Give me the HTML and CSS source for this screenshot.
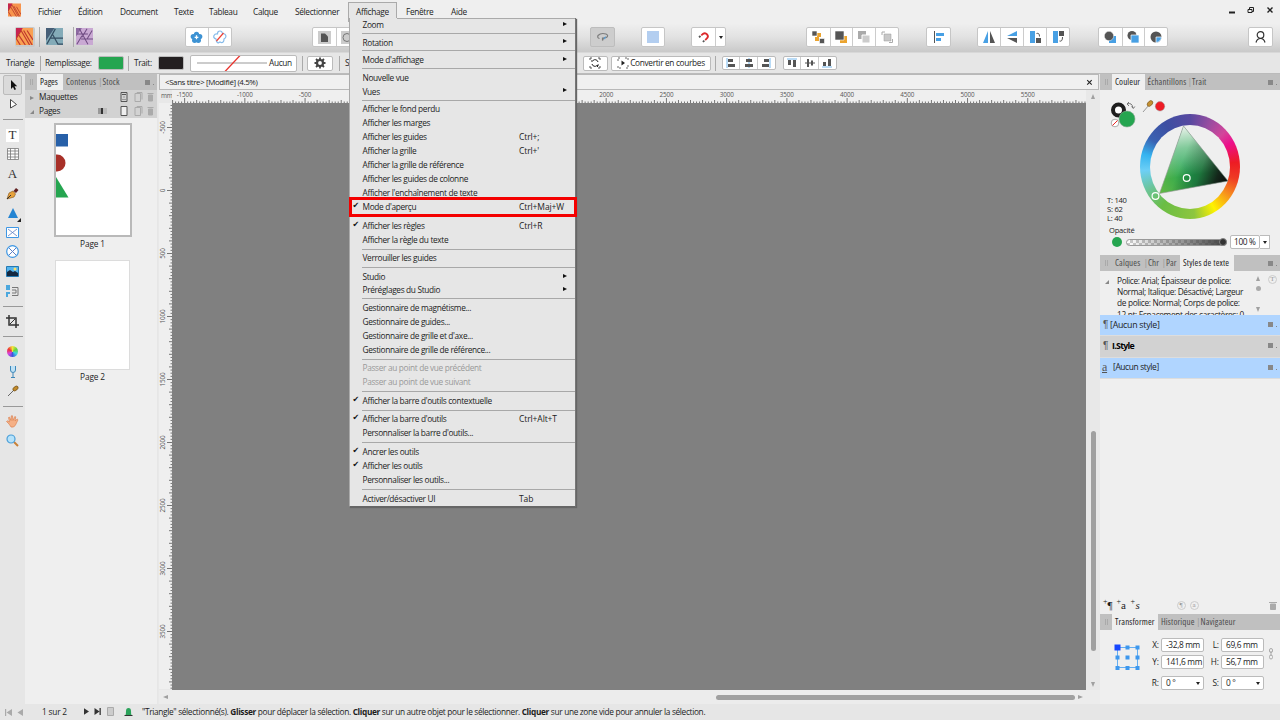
FILE: index.html
```html
<!DOCTYPE html>
<html lang="fr">
<head>
<meta charset="utf-8">
<title>Sans titre</title>
<link rel="stylesheet" href="styles.css">
</head>
<body>
<div class="app">
  <header class="menubar">
    <svg class="logo" width="13" height="14" viewBox="0 0 20 20"><rect width="20" height="20" fill="#f7944d"/><path d="M0 0H7L0 12Z" fill="#c4264e"/><path d="M0 12L6 2L16 20M4 5L13 20M0 12L5 20M9 4L18 20M13 5L20 17" stroke="#b93a2c" stroke-width="1.3" fill="none"/></svg>
    <span>Fichier</span><span>Édition</span><span>Document</span><span>Texte</span><span>Tableau</span><span>Calque</span><span>Sélectionner</span><span class="open">Affichage</span><span>Fenêtre</span><span>Aide</span>
    <div class="winctl">
      <svg width="60" height="14" viewBox="0 0 60 14" fill="none" stroke="#222"><path d="M3 10.500h6" stroke-width="2"/><path d="M22 7.500h4v3h-4zM23.500 7v-1.500h4v4h-1.500" /><path d="M41.500 5.500l5 5m0-5l-5 5" stroke-width="1.400"/></svg>
    </div>
  </header>

  <div class="toolbar">
    <div class="persona on"><svg width="17" height="17" viewBox="0 0 20 20"><rect width="20" height="20" fill="#f9a052"/><path d="M0 0H8L0 13Z" fill="#c72350"/><path d="M0 13L6 3L16 20M3 8L11 20M0 12L5 20M9 3L19 20M13 3L20 14" stroke="#c0392d" stroke-width="1.400" fill="none"/></svg></div>
    <div class="persona p2"><svg width="17" height="17" viewBox="0 0 20 20"><rect width="20" height="20" fill="#84abb8"/><path d="M0 0H10L0 15Z" fill="#465e77"/><path d="M11 1L1 19M5 12H20M8 8L14 19H20" stroke="#344d62" stroke-width="1.400" fill="none"/></svg></div>
    <div class="persona p3"><svg width="17" height="17" viewBox="0 0 20 20"><rect width="20" height="20" fill="#c9a9d3"/><path d="M0 0H7L0 10Z" fill="#8d6aa2"/><path d="M4 1L14 19M13 1L7 11M1 7H14M6 13H20M19 3L13 13M7 9L1 19" stroke="#704d83" stroke-width="1.200" fill="none"/></svg></div>
    <div class="grp g1">
      <b><svg width="13" height="13" viewBox="0 0 14 14"><g fill="#3d92d3"><circle cx="7" cy="3.500" r="2.800"/><circle cx="10.500" cy="6" r="2.800"/><circle cx="9" cy="10" r="2.800"/><circle cx="5" cy="10" r="2.800"/><circle cx="3.500" cy="6" r="2.800"/></g><path d="M7 4.500V9M5 6.800h4" stroke="#fff" stroke-width="1.400"/></svg></b>
      <b><svg width="14" height="14" viewBox="0 0 14 14"><path d="M7 1Q9 1 9.500 3.500Q12.500 3.500 13 6Q13 8 11 9Q11 13 8 12.500L7 12L5 13Q3 12 3 9Q0 8 1 5.500Q2 3.500 4.500 4Q4.500 1 7 1Z" fill="#fff" stroke="#86bbea" stroke-width="1.200"/><path d="M3.500 11L10.500 3" stroke="#ee4035" stroke-width="1.200"/></svg></b>
    </div>
    <div class="grp g2">
      <b><svg width="13" height="13" viewBox="0 0 13 13"><rect width="13" height="13" fill="#ccc"/><path d="M3 2.500h4l3 3V11H3z" fill="#555"/></svg></b>
      <b><svg width="13" height="13" viewBox="0 0 13 13"><rect width="13" height="13" fill="#ccc"/><circle cx="6" cy="6.500" r="4" fill="none" stroke="#777"/></svg></b>
    </div>
    <div class="grp g3 pressed"><b><svg width="14" height="12" viewBox="0 0 14 12"><path d="M3.500 7.500Q1 7 2 4.500Q5 1.500 10 3Q13 4.500 10.500 6.500L7.500 7L6.500 9.500V6.500" fill="none" stroke="#7c7c7c" stroke-width="1.200"/><path d="M7.500 7L10 5L9 8.500Z" fill="#519bd5"/></svg></b></div>
    <div class="grp g4"><b><i class="bluesq"></i></b></div>
    <div class="grp g5"><b><svg width="14" height="14" viewBox="0 0 14 14"><g transform="rotate(50 7 7)" fill="none" stroke-width="1.800"><path d="M4 8V6a3 3 0 016 0V8" stroke="#dc292c"/><path d="M4 9v2M10 9v2" stroke="#555"/></g></svg></b><b class="drop"><i class="dn"></i></b></div>
    <div class="grp g6">
      <b><svg width="14" height="14"><path d="M6 3h4v4H6zM4 7h4v4H4z" fill="#eba430"/><path d="M1 1h5v5H1zM8.500 8.500h5v5h-5z" fill="#555" stroke="#fff" stroke-width=".6"/></svg></b>
      <b><svg width="14" height="14"><path d="M6 6h7v7H6z" fill="#eba430"/><path d="M1 1h9v9H1z" fill="#555" stroke="#fff" stroke-width=".6"/></svg></b>
      <b><svg width="14" height="14"><path d="M1 1h8v8H1z" fill="#aaa"/><path d="M5 5h8v8H5z" fill="#ccc" stroke="#fff"/></svg></b>
      <b><svg width="14" height="14"><path d="M2 5V2h3M9 12.500h3.500v-3.500" fill="none" stroke="#aaa"/><path d="M4 4h7v7H4z" fill="#c8c8c8" stroke="#999" stroke-width=".5"/></svg></b>
    </div>
    <div class="grp g7"><b><svg width="12" height="12"><path d="M1.500 0v12" stroke="#555"/><path d="M3 2h8v3H3zM3 7h5v3H3z" fill="#48a0e4"/></svg></b></div>
    <div class="grp g8">
      <b><svg width="14" height="14"><path d="M6 1v12H1z" fill="#48a0e4"/><path d="M8 1v12h5z" fill="#555"/></svg></b>
      <b><svg width="14" height="14"><path d="M12 1v5H2z" fill="#48a0e4"/><path d="M12 13V8H2z" fill="#555"/></svg></b>
      <b><svg width="14" height="14"><path d="M2 1h5v12H2z" fill="#48a0e4"/><path d="M8 8h5v5H8z" fill="#555"/><path d="M8.500 3.500q3-1 3 3" fill="none" stroke="#555"/></svg></b>
      <b><svg width="14" height="14"><path d="M2 1h5v12H2z" fill="#48a0e4"/><path d="M8 1h5v5H8z" fill="#555"/><path d="M8.500 11q3 1 3-4" fill="none" stroke="#555"/></svg></b>
    </div>
    <div class="grp g9">
      <b><svg width="14" height="14"><path d="M6 6h7v7H6z" fill="#48a0e4"/><circle cx="6" cy="6" r="4.700" fill="#555" stroke="#fff" stroke-width=".5"/></svg></b>
      <b><svg width="14" height="14"><circle cx="6" cy="5.500" r="4.500" fill="#555"/><path d="M5 5h8v8H5z" fill="#48a0e4" stroke="#fff" stroke-width=".7"/></svg></b>
      <b><svg width="14" height="14"><circle cx="7" cy="7" r="5.500" fill="#555"/><path d="M7 7h5.500a5.500 5.500 0 01-5.500 5.500z" fill="#48a0e4" stroke="#fff" stroke-width=".7"/></svg></b>
    </div>
    <div class="grp g10"><b><svg width="13" height="14" fill="none" stroke="#333" stroke-width="1.200"><circle cx="6.500" cy="5" r="3.300"/><path d="M2 12.500Q3 8.500 6.500 8.500T11 12.500"/></svg></b></div>
  </div>

  <div class="context">
    <span>Triangle</span><i class="vs"></i><span>Remplissage:</span><i class="sw green"></i><i class="vs"></i><span>Trait:</span><i class="sw black"></i>
    <div class="stroke"><svg width="76" height="17"><path d="M6 8h70" stroke="#999"/><path d="M34 16.500L49 .5" stroke="#e8322c" stroke-width="1.300"/></svg><span>Aucun</span></div>
    <i class="vs"></i>
    <div class="box"><svg width="12" height="12" viewBox="-6 -6 12 12"><circle r="3" fill="none" stroke="#444" stroke-width="2.200"/><path d="M0-5.500V-3M0 5.500V3M-5.500 0H-3M5.500 0H3M-4-4l1.500 1.500M4 4L2.500 2.500M-4 4l1.500-1.500M4-4L2.500-2.500" stroke="#444" stroke-width="1.800"/></svg></div>
    <i class="vs"></i><span>S</span>
    <div class="box rot"><svg width="12" height="12" fill="none" stroke="#555"><path d="M1 3V1h2M9 1h2v2M11 9v2H9M3 11H1V9" /><path d="M3 7a3 3 0 005 1.500M9 5A3 3 0 004 3.500M8.500 10V8H10M3 5V3" stroke="#222"/></svg></div>
    <div class="box conv"><svg width="12" height="12"><path d="M1 4V1h3M8 1h3v3M11 8v3H8M4 11H1V8" fill="none" stroke="#666" stroke-dasharray="2 1"/><path d="M4.500 3.500v5L8 6z" fill="#222"/></svg><span>Convertir en courbes</span></div>
    <i class="vs"></i>
    <div class="tri">
      <b><svg width="10" height="10"><path d="M1 0v10" stroke="#75b8ee"/><path d="M2 1h5v3H2zM2 6h7v3H2z" fill="#555"/></svg></b>
      <b><svg width="10" height="10"><path d="M5 0v10" stroke="#75b8ee"/><path d="M2 1h6v3H2zM1 6h8v3H1z" fill="#555"/></svg></b>
      <b><svg width="10" height="10"><path d="M9 0v10" stroke="#75b8ee"/><path d="M3 1h5v3H3zM1 6h7v3H1z" fill="#555"/></svg></b>
    </div>
    <div class="tri t2">
      <b><svg width="10" height="10"><path d="M0 1h10" stroke="#75b8ee"/><path d="M1 2h3v5H1zM6 2h3v7H6z" fill="#555"/></svg></b>
      <b><svg width="10" height="10"><path d="M0 5h10" stroke="#555"/><path d="M2 1h2v8H2zM6 2.500h2v5H6z" fill="#555"/></svg></b>
      <b><svg width="10" height="10"><path d="M0 9h10" stroke="#75b8ee"/><path d="M1 4h3v4H1zM6 1h3v7H6z" fill="#555"/></svg></b>
    </div>
  </div>

  <main class="main">
    <nav class="tools">
      <div class="tool sel"><svg width="12" height="12"><path d="M4 1v9l2-2 1.500 3 1.500-.7-1.500-3h2.700z" fill="#111"/></svg></div>
      <div class="tool"><svg width="12" height="12"><path d="M3.500 1.500v8.500L9.500 6.500z" fill="#fff" stroke="#444"/></svg></div>
      <hr>
      <div class="tool serif tbox">T</div>
      <div class="tool"><svg width="12" height="12"><path d="M.5.5h11v11H.5zM.5 3h11M.5 6h11M.5 9h11M3.500 .5v11M8 .5v11" fill="#fff" stroke="#777" stroke-width=".8"/></svg></div>
      <div class="tool serif">A</div>
      <div class="tool"><svg width="13" height="13"><path d="M1 12L3 6l4-2 2.500 3L8 10z" fill="#e8a33d" stroke="#815018" stroke-width=".6"/><path d="M1 12L5 8" stroke="#333"/><path d="M7.500 4L10 1l2.500 2L10 6z" fill="#612121"/></svg></div>
      <div class="tool corner"><svg width="12" height="12"><path d="M6 1l5 10H1z" fill="#2484d2"/></svg></div>
      <div class="tool"><svg width="13" height="11"><path d="M.5.5h12v10H.5z" fill="#fff" stroke="#3e97e4"/><path d="M2 2l9 7M11 2L2 9" stroke="#5c7fc4" stroke-width=".8"/></svg></div>
      <div class="tool"><svg width="13" height="13"><circle cx="6.500" cy="6.500" r="5.800" fill="#fff" stroke="#3e97e4" stroke-width="1.200"/><path d="M3 3l7 7M10 3l-7 7" stroke="#5c7fc4"/></svg></div>
      <div class="tool"><svg width="13" height="11"><path d="M.5.5h12v10H.5z" fill="#54b4ee" stroke="#247ab3"/><circle cx="9" cy="3" r="1.500" fill="#ffe069"/><path d="M1 6l3-2 3 2 2-1 3 2v3H1z" fill="#142941"/></svg></div>
      <div class="tool"><svg width="13" height="12"><path d="M0 0h4v5H0zM0 7h4v2H2v3H0z" fill="#4ca8de"/><path d="M6 2.500h6v8H6M6 5h4v3H6" fill="none" stroke="#777"/></svg></div>
      <hr>
      <div class="tool"><svg width="13" height="13" fill="none" stroke="#333" stroke-width="1.500"><path d="M3 0v10h10M0 3h10v10"/><path d="M4 9l5-5" stroke-width="1"/></svg></div>
      <hr>
      <div class="tool"><i class="mini"></i></div>
      <div class="tool"><svg width="10" height="13"><path d="M2.500 1v4q0 2.500 2.500 2.500t2.500-2.500V1M5 8v4M3 12.500h4" fill="#bfe1f5" stroke="#3d87b9"/></svg></div>
      <div class="tool"><svg width="12" height="12"><path d="M1 11L8 4" stroke="#666"/><ellipse cx="8.500" cy="3.500" rx="3" ry="1.900" transform="rotate(-40 8.500 3.500)" fill="#c28b2c" stroke="#644310" stroke-width=".6"/></svg></div>
      <hr>
      <div class="tool"><svg width="13" height="13"><path d="M3 9L.5 6.500l1-.7L3.500 7 2.500 2.500l1-.4L5 5.500 5.300.8h1.200L7 5.500 8.800 1.500l1 .4L9 6l2.200-2 .8.800L9.500 10Q8 13 5 12z" fill="#f5b086" stroke="#d87847" stroke-width=".6"/></svg></div>
      <div class="tool"><svg width="13" height="13"><path d="M8 8l4 4" stroke="#c98138" stroke-width="2"/><circle cx="5" cy="5" r="4" fill="#b6e2fa" stroke="#4b9fd8" stroke-width="1.200"/></svg></div>
    </nav>

    <aside class="pages">
      <div class="tabs"><i class="grip"></i><span class="tab">Pages</span><span class="off">Contenus</span><em>|</em><span class="stock">Stock</span><i class="more"></i></div>
      <div class="prow"><i class="arr r"></i><span>Maquettes</span>
        <svg width="34" height="10" viewBox="0 0 34 10" fill="none" stroke="#555"><path d="M1 .5h6v9H1zM2 2.500h4" /><path d="M3 5h2M2 7.500h4" stroke="#999"/><path d="M15 1.500h5.500v8H15zM17 1.500v-1h5v7" stroke="#aaa"/><path d="M28.500 3h4v6h-4zM27.500 1.500h6" fill="#aaa" stroke="#aaa"/></svg></div>
      <div class="prow"><i class="arr"></i><span>Pages</span><i class="bars"></i>
        <svg width="34" height="10" viewBox="0 0 34 10" fill="none" stroke="#555"><path d="M1 .5h6v9H1z" fill="#eee"/><path d="M15 1.500h5.500v8H15zM17 1.500v-1h5v7" stroke="#aaa"/><path d="M28.500 3h4v6h-4zM27.500 1.500h6" fill="#aaa" stroke="#aaa"/></svg></div>
      <figure class="thumb first"><svg width="73" height="108"><path d="M0 9h12v12.500H0z" fill="#2760a8"/><path d="M0 29.500h1a8.300 8.300 0 010 17H0z" fill="#a83028"/><path d="M0 52l12.500 20.500H0z" fill="#25a550"/></svg></figure>
      <p>Page 1</p>
      <figure class="thumb second"></figure>
      <p>Page 2</p>
    </aside>

    <section class="doc">
      <div class="doctab"><span>&lt;Sans titre&gt; [Modifié] (4.5%)</span><svg width="7" height="7"><path d="M1.200 1.200l4.500 4.500m0-4.500l-4.500 4.500" stroke="#222" stroke-width="1.100"/></svg></div>
      <div class="work">
        <div class="unit">mm</div>
        <svg class="hr" id="hruler" width="914" height="14"></svg>
        <div class="vbar"><i class="ar u"></i><i class="vthumb"></i><i class="ar d"></i></div>
        <svg class="vr" id="vruler" width="14" height="586"></svg>
        <div class="canvas"></div>
        <div class="hbar"><i class="ar l"></i><i class="hthumb"></i><i class="ar rt"></i></div>
      </div>
    </section>

    <aside class="studio">
      <div class="tabs s1"><i class="grip"></i><span class="tab">Couleur</span><span class="off">Échantillons</span><em>|</em><span>Trait</span><i class="more"></i></div>
      <div class="colour">
        <svg width="180" height="134" viewBox="1100 90 180 134">
          <defs>
            <linearGradient id="tw" gradientUnits="userSpaceOnUse" x1="1183" y1="126" x2="1192" y2="188"><stop offset="0" stop-color="#eef4ee"/><stop offset=".35" stop-color="#e0f0e4" stop-opacity=".5"/><stop offset=".8" stop-color="#fff" stop-opacity="0"/></linearGradient>
            <linearGradient id="tb" gradientUnits="userSpaceOnUse" x1="1228" y1="181" x2="1173" y2="160"><stop offset="0" stop-color="#0a0a0a"/><stop offset=".2" stop-color="#111" stop-opacity=".85"/><stop offset=".5" stop-color="#111" stop-opacity=".3"/><stop offset=".85" stop-color="#000" stop-opacity="0"/></linearGradient>
            <linearGradient id="tg" gradientUnits="userSpaceOnUse" x1="1159" y1="193" x2="1190" y2="175"><stop offset="0" stop-color="#66b945"/><stop offset="1" stop-color="#22a450"/></linearGradient>
          </defs>
          <circle cx="1118.500" cy="110" r="5.500" fill="#fff" stroke="#1e1e1e" stroke-width="4"/>
          <path d="M1127 104q5-2 6 4M1129 102l-2 2 2 2M1131.500 106.500l1.800 2 1.500-2" fill="none" stroke="#777"/>
          <circle cx="1115" cy="123" r="3.800" fill="#fff" stroke="#999" stroke-width=".8"/><path d="M1112.500 125.500l5-5" stroke="#e22"/>
          <circle cx="1127" cy="119" r="8" fill="#25a550" stroke="#8aa894" stroke-width=".6"/>
          <path d="M1143 112l6-7" stroke="#999"/><ellipse cx="1150" cy="103.500" rx="3.300" ry="2.200" transform="rotate(-45 1150 103.500)" fill="#c49032" stroke="#765218" stroke-width=".6"/>
          <circle cx="1160" cy="106.300" r="4.700" fill="#ee1c25" stroke="#999" stroke-width=".5"/>
          <foreignObject x="1140" y="114" width="100" height="106"><div class="wheel"><div class="hole"></div></div></foreignObject>
          <path d="M1183.500 126L1228 181L1159.500 193.500Z" fill="url(#tg)"/><path d="M1183.500 126L1228 181L1159.500 193.500Z" fill="url(#tw)"/><path d="M1183.500 126L1228 181L1159.500 193.500Z" fill="url(#tb)" stroke="#999" stroke-width=".6"/>
          <circle cx="1186.700" cy="178" r="3.400" fill="none" stroke="#fff" stroke-width="1.200"/>
          <circle cx="1155.500" cy="196" r="3.400" fill="none" stroke="#fff" stroke-width="1.200"/>
        </svg>
        <div class="hsl">T: 140<br>S: 62<br>L: 40</div>
        <div class="oplabel">Opacité</div>
        <div class="oprow"><i class="dot"></i><i class="slider"><i class="knob"></i></i><span class="field">100 %</span><span class="fdrop"><i class="dn"></i></span></div>
      </div>
      <div class="tabs s2"><i class="grip"></i><span class="calques">Calques</span><em>|</em><span class="short">Chr</span><em>|</em><span class="short">Par</span><span class="tab">Styles de texte</span><i class="more"></i></div>
      <div class="desc"><i class="arr"></i><div class="desctext">Police: Arial; Épaisseur de police:<br>Normal; Italique: Désactivé; Largeur<br>de police: Normal; Corps de police:<br>12 pt; Espacement des caractères: 0</div>
        <div class="dscroll"><i class="ar u"></i><i class="ball"></i><i class="ar d"></i></div><i class="tcirc">T</i></div>
      <div class="style blue"><b>¶</b><span>[Aucun style]</span><i class="more"></i></div>
      <div class="style grey"><b>¶</b><span class="bold">I.Style</span><i class="more"></i></div>
      <div class="style blue chr"><b>a</b><span>[Aucun style]</span><i class="more"></i></div>
      <div class="empty"></div>
      <div class="sbtns"><span><sup>+</sup>¶</span><span><sup>+</sup>a</span><span class="ital"><sup>+</sup>s</span><i class="tcirc c1">¶</i><i class="tcirc">a</i><svg width="8" height="9"><path d="M1.500 3h5v5.500h-5zM0 1.500h8" fill="#aaa" stroke="#aaa"/></svg></div>
      <div class="tabs s3"><i class="grip"></i><span class="tab">Transformer</span><span class="off">Historique</span><em>|</em><span>Navigateur</span></div>
      <div class="xform">
        <svg class="anchor" width="26" height="26"><path d="M3.500 3.500h20v20h-20z" fill="none" stroke="#66aef0"/><g fill="#3e98ee"><path d="M11.500 1.500h4v4h-4zM21.500 1.500h4v4h-4zM1.500 11.500h4v4h-4zM11.500 11.500h4v4h-4zM21.500 11.500h4v4h-4zM1.500 22h4v4h-4zM11.500 22h4v4h-4zM21.500 22h4v4h-4z"/></g><path d="M.5.5h6v6h-6z" fill="#1747ff"/></svg>
        <label>X:</label><span class="field">-32,8 mm</span><label>L:</label><span class="field">69,6 mm</span>
        <label>Y:</label><span class="field">141,6 mm</span><label>H:</label><span class="field">56,7 mm</span>
        <label>R:</label><span class="field">0 °<i class="dn"></i></span><label>S:</label><span class="field">0 °<i class="dn"></i></span>
        <svg class="link" width="6" height="12" fill="none" stroke="#aaa"><rect x="1.500" y=".5" width="3" height="4" rx="1.500"/><rect x="1.500" y="7" width="3" height="4" rx="1.500"/><path d="M3 3v5"/></svg>
      </div>
    </aside>
  </main>

  <footer class="status">
    <svg width="30" height="9" fill="#aaa"><path d="M3 1h1.200v7H3zM10 1v7L4.500 4.500zM21 1v7l-5.500-3.500z"/></svg>
    <span class="count">1 sur 2</span>
    <svg width="34" height="10"><path d="M-1 1v7l5.500-3.500zM10 1v7l5-3.500zM15 1h1.300v7H15z" fill="#333" transform="translate(.5)"/><path d="M23.500.5h6v8h-6z" fill="#ccc" stroke="#aaa"/></svg>
    <svg class="bell" width="9" height="10"><path d="M1.500 8Q2 7 2 4a2.500 3 0 015 0Q7 7 7.500 8z" fill="#2ca35b"/><path d="M.5 8.500h8" stroke="#333"/></svg>
    <span class="hint">"Triangle" sélectionné(s). <strong>Glisser</strong> pour déplacer la sélection. <strong>Cliquer</strong> sur un autre objet pour le sélectionner. <strong>Cliquer</strong> sur une zone vide pour annuler la sélection.</span>
  </footer>
</div>

<div class="menu">
  <div class="it sub">Zoom</div><hr>
  <div class="it sub">Rotation</div><hr>
  <div class="it sub">Mode d'affichage</div><hr>
  <div class="it">Nouvelle vue</div>
  <div class="it sub">Vues</div><hr>
  <div class="it">Afficher le fond perdu</div>
  <div class="it">Afficher les marges</div>
  <div class="it">Afficher les guides<kbd>Ctrl+;</kbd></div>
  <div class="it">Afficher la grille<kbd>Ctrl+'</kbd></div>
  <div class="it">Afficher la grille de référence</div>
  <div class="it">Afficher les guides de colonne</div>
  <div class="it">Afficher l'enchaînement de texte</div>
  <div class="it ck">Mode d'aperçu<kbd>Ctrl+Maj+W</kbd></div><hr>
  <div class="it ck">Afficher les règles<kbd>Ctrl+R</kbd></div>
  <div class="it">Afficher la règle du texte</div><hr>
  <div class="it">Verrouiller les guides</div><hr>
  <div class="it sub">Studio</div>
  <div class="it sub">Préréglages du Studio</div><hr>
  <div class="it">Gestionnaire de magnétisme...</div>
  <div class="it">Gestionnaire de guides...</div>
  <div class="it">Gestionnaire de grille et d'axe...</div>
  <div class="it">Gestionnaire de grille de référence...</div><hr>
  <div class="it dis">Passer au point de vue précédent</div>
  <div class="it dis">Passer au point de vue suivant</div><hr>
  <div class="it ck">Afficher la barre d'outils contextuelle</div><hr>
  <div class="it ck">Afficher la barre d'outils<kbd>Ctrl+Alt+T</kbd></div>
  <div class="it">Personnaliser la barre d'outils...</div><hr>
  <div class="it ck">Ancrer les outils</div>
  <div class="it ck">Afficher les outils</div>
  <div class="it">Personnaliser les outils...</div><hr>
  <div class="it">Activer/désactiver UI<kbd>Tab</kbd></div>
  <div class="mark"></div>
</div>
<script src="rulers.js"></script>
</body>
</html>
```
FILE: styles.css
```css
* { box-sizing: border-box; }
body { margin: 0; width: 1280px; height: 720px; overflow: hidden; font-family: "Open Sans", "Noto Sans", sans-serif; font-size: 8.3px; letter-spacing: -0.33px; line-height: 12px; color: #1c1c1c; background: #e6e6e6; }
i, em { font-style: normal; display: block; }
svg { display: block; flex: none; }
span { white-space: nowrap; }
.app { width: 1280px; height: 720px; display: flex; flex-direction: column; }

.menubar { height: 22px; flex: none; background: #efefef; display: grid; grid-template-columns: 38px 40px 42px 54px 35px 44px 42px 61px 50px 45px 1fr 54.5px; align-items: center; padding-top: 1px; }
.logo { margin: -3px 0 0 8px; }
.menubar .open { margin-left: -8px; padding: 3px 0 4px 7px; width: 49px; height: 20px; align-self: start; margin-top: 1px; border: 1px solid #aaa; border-bottom: 0; background: #e6e6e6; }
.winctl { padding-bottom: 6px; }

.toolbar { height: 31px; flex: none; background: linear-gradient(#efefef 5%, #e2e2e2 50%, #cacaca 98%); border-bottom: 1px solid #d8d8d8; display: flex; align-items: flex-start; padding-top: 5px; }
.persona { height: 19px; width: 19px; margin-left: 15px; box-sizing: content-box; padding: 1px 0 0 1px; flex: none; }
.persona.on { background: #c9c9c9; border-radius: 2px; }
.p2 { margin-left: 4px; border-left: 1px solid #aaa; padding-left: 6px; }
.p3 { margin-left: 8px; border-left: 1px solid #aaa; padding-left: 2px; }
.grp { display: flex; height: 20px; background: #fff; border: 1px solid #c6c6c6; border-radius: 2px; flex: none; }
.grp b { width: 22.8px; display: flex; align-items: center; justify-content: center; border-left: 1px solid #ccc; }
.grp b:first-child { border-left: 0; }
.grp .drop { width: 9.5px; }
.grp.pressed { background: #cdcdcd; border-color: #bdbdbd; }
.grp.g1 { margin-left: 89.5px; }
.grp.g2 { margin-left: 79.9px; }
.grp.g3 { margin-left: 230.9px; }
.grp.g4 { margin-left: 25.3px; }
.grp.g5 { margin-left: 26.1px; }
.grp.g6 { margin-left: 80px; }
.grp.g7 { margin-left: 27.4px; }
.grp.g8 { margin-left: 25.5px; }
.grp.g9 { margin-left: 27.9px; }
.grp.g10 { margin-left: 80.3px; }
.bluesq { width: 12px; height: 12px; background: #b3cef0; }
.dn { width: 0; height: 0; border: 2px solid transparent; border-top: 3px solid #222; border-bottom: 0; }

.context { height: 21px; flex: none; background: #e6e6e6; border-bottom: 1px solid #bbb; display: grid; grid-template-columns: 34px 5px 53px 30px 6px 24px 32px 112px 5px 32px 6px 237.5px 28.5px 104px 6.5px 61px 55px; padding: 0 0 0 6px; align-items: center; }
.vs { width: 1px; height: 15px; background: #aaa; }
.sw { width: 26px; height: 14px; border-radius: 2px; border: 1px solid #bbb; }
.green { background: #25a550; }
.black { background: #231f20; }
.stroke { width: 107px; height: 17px; background: #fff; border: 1px solid #bbb; border-radius: 2px; display: flex; align-items: center; overflow: hidden; }
.stroke span { margin-left: 2px; }
.box { width: 26px; height: 15px; background: #fff; border: 1px solid #bbb; border-radius: 2px; display: flex; align-items: center; justify-content: center; }
.rot { width: 25px; }
.conv { width: 100px; gap: 1px; }
.tri { display: flex; height: 14px; width: 54px; background: #fff; border: 1px solid #bbb; border-radius: 2px; }
.tri b { flex: 1; display: flex; align-items: center; justify-content: center; border-left: 1px solid #ccc; }
.tri b:first-child { border: 0; }

.main { height: 630px; flex: none; display: grid; grid-template-columns: 25px 133px 942px 180px; }
.tools { background: #e6e6e6; padding-top: 1px; display: flex; flex-direction: column; }
.tool { height: 19.5px; flex: none; display: flex; align-items: center; justify-content: center; position: relative; }
.tool.sel { border: 1px solid #bbb; background: #dadada; margin: 0 3px; border-radius: 2px; }
.tools hr { margin: 5px 2px 5px 3px; height: 1px; border: 0; background: #999; flex: none; }
.serif { font: 13px "Liberation Serif", serif; letter-spacing: 0; color: #333; }
.tbox { background: #fff; margin: 4px 6px 3px; height: 12.5px; }
.corner::after { content: ""; position: absolute; right: 4px; bottom: 1px; border: 2px solid #222; border-left-color: transparent; border-top-color: transparent; }
.mini { width: 11px; height: 11px; border-radius: 50%; background: conic-gradient(#f4e33d, #62d43c, #3cd6e4, #3f55dd, #d944df, #ee3434, #f4e33d); }

.pages { background: #efefef; margin-right: 1px; }
.tabs { height: 16px; background: #c0c0c0; display: flex; align-items: center; color: #4c4c4c; font-stretch: 75%; font-size: 9px; letter-spacing: .12px; }
.grip { width: 3px; height: 6px; margin: 0 0 0 5px; border: solid #aaa; border-width: 0 1px; }
.tab { background: #efefef; color: #1c1c1c; height: 16px; line-height: 16px; margin-left: 4px; padding: 0 3px; }
.pages .tab { width: 26px; letter-spacing: 0; }
.pages .off { width: 32.5px; margin-left: 3px; }
.tabs em { color: #999; width: 4px; text-align: left; }
.more { width: 9px; height: 5px; margin: 0 3px 0 auto; border-left: 5px solid #888; background: linear-gradient(#888, #888) right bottom/1px 1px no-repeat; }
.prow { height: 14px; background: #d2d2d2; display: flex; align-items: center; padding-right: 3px; }
.arr { width: 0; height: 0; margin: 1px 5px 0 5px; border: 2px solid transparent; border-right-color: #888; border-bottom-color: #888; }
.arr.r { border: 2.5px solid transparent; border-left: 4px solid #888; border-right: 0; }
.prow span { flex: 1; }
.bars { width: 9px; height: 6px; margin-right: 13px; background: linear-gradient(90deg, #999 30%, #333 30% 60%, #bbb 60%); }
.thumb { background: #fff; }
.thumb.first { width: 78px; height: 114px; border: 2px solid #b9b9b9; margin: 5px 0 0 28.5px; }
.thumb.second { width: 75px; height: 110px; border: 1px solid #dcdcdc; margin: 9.5px 0 0 30px; }
.pages p { margin: 1px 0 0; text-align: center; padding-left: 3px; letter-spacing: -.15px; }

.doc { padding-left: 1px; background: #e8e8e8; }
.doctab { height: 16px; width: 940px; background: #f0f0f0; border: 1px solid #b8b8b8; display: flex; align-items: center; justify-content: space-between; padding: 0 5px 0 5px; font-size: 7.9px; letter-spacing: -.36px; }
.work { display: grid; grid-template: 13px 587px 14px / 13px 914px 14px; }
.unit { font-size: 6.5px; line-height: 12px; color: #555; padding-left: 2px; letter-spacing: -.2px; }
.hr, .vr { background: #efefef; }
.vr { width: 13px; }
.canvas { background: #808080; }
.vbar { grid-area: 1 / 3 / 3 / 4; display: flex; flex-direction: column; align-items: center; padding: 4px 0 3px; }
.vthumb { width: 5px; height: 220px; border-radius: 3px; background: #a0a0a0; margin: auto 0 31px; }
.hbar { grid-column: 1 / 4; display: flex; align-items: center; padding: 0 17px 0 4px; background: #ececec; }
.hthumb { width: 359px; height: 5px; border-radius: 3px; background: #a0a0a0; margin: 0 3px 0 auto; }
.ar { width: 0; height: 0; border: 2.5px solid transparent; }
.ar.u { border-bottom: 5px solid #a0a0a0; border-top: 0; }
.ar.d { border-top: 5px solid #a0a0a0; border-bottom: 0; }
.ar.l { border-right: 5px solid #a0a0a0; border-left: 0; }
.ar.rt { border-left: 5px solid #a0a0a0; border-right: 0; }
.tick { stroke: #555; }
.rl { font-size: 6.3px; fill: #555; text-anchor: middle; letter-spacing: -.1px; }

.studio { background: #efefef; display: flex; flex-direction: column; height: 630px; }
.studio .tabs { flex: none; }
.s1 .tab { width: 32.5px; }
.s1 .off { width: 43.5px; padding-left: 3px; }
.s2 .calques { width: 31px; padding-left: 2px; margin-left: 5px; }
.s2 .short { width: 14px; }
.s2 .tab { margin-left: 0; width: 54px; }
.s3 .tab { width: 46px; }
.s3 .off { width: 38.5px; padding-left: 3px; }
.colour { height: 165px; position: relative; flex: none; }
.wheel { width: 100px; height: 105px; border-radius: 50%; padding: 10.5px 10px; background: conic-gradient(#5749a0, #9a4da0 25deg, #d3459b 45deg, #ec0f8c 60deg, #ed1c24 85deg, #ef3b24 105deg, #f68b1f 125deg, #fff200 150deg, #8dc63f 175deg, #6abd45 215deg, #6cc495 240deg, #6dcff6 265deg, #35b4f0 285deg, #3a62b2 305deg, #3d4fa2 330deg, #5749a0); }
.hole { height: 84px; border-radius: 50%; background: #efefef; }
.hsl { position: absolute; left: 7px; top: 106px; line-height: 9px; font-size: 7.6px; letter-spacing: -.25px; }
.oplabel { position: absolute; left: 9px; top: 134px; font-size: 7.6px; letter-spacing: -.25px; }
.oprow { position: absolute; left: 12px; top: 145px; display: flex; align-items: center; height: 14px; }
.dot { width: 10px; height: 10px; border-radius: 50%; background: #25a550; }
.slider { width: 101px; height: 7px; margin: 0 3px 0 4px; border-radius: 4px; border: 1px solid #999; background: linear-gradient(90deg, #eee0, #444), repeating-conic-gradient(#ccc 0 25%, #fff 0 50%) 0 0/6px 6px; position: relative; }
.knob { position: absolute; right: -1px; top: -2px; width: 8px; height: 8px; border-radius: 50%; background: #333; border: 1px solid #888; }
.field { background: #fff; border: 1px solid #bbb; border-radius: 2px; height: 14px; line-height: 12px; padding-left: 4px; }
.oprow .field { width: 30px; padding-left: 3px; }
.fdrop { width: 10px; height: 14px; background: #fff; border: 1px solid #bbb; border-left: 0; display: flex; align-items: center; justify-content: center; }
.desc { height: 44px; overflow: hidden; display: flex; flex: none; position: relative; padding-top: 4px; }
.desc .arr { margin: 5px 8px 0 5px; }
.desctext { width: 138px; line-height: 11.2px; white-space: nowrap; }
.dscroll { width: 6px; display: flex; flex-direction: column; align-items: center; padding: 1px 0 3px; }
.ball { width: 5px; height: 5px; border-radius: 50%; background: #aaa; margin: 5px 0 auto; }
.tcirc { width: 9px; height: 9px; border: 1px solid #ccc; border-radius: 50%; font: 7px/7px "Liberation Serif", serif; text-align: center; color: #999; letter-spacing: 0; }
.desc .tcirc { margin-left: 7px; }
.style { height: 21.3px; flex: none; display: flex; align-items: center; padding-left: 3px; font-size: 8.8px; letter-spacing: -.25px; border-bottom: 1px solid #ddd; padding-bottom: 1px; }
.style b { font: 10px "Liberation Sans", sans-serif; color: #555; width: 7px; }
.blue { background: #b0d5ff; }
.grey { background: #d2d2d2; }
.bold { font-weight: 700; color: #000; padding-left: 2px; letter-spacing: -.7px; }
.chr b { font: 12px "Liberation Serif", serif; text-decoration: underline; width: 10px; margin-left: -1px; }
.chr span { padding-left: 1px; font-size: 8.4px; letter-spacing: -.35px; }
.empty { flex: 1; }
.sbtns { height: 18px; flex: none; display: flex; align-items: center; padding: 0 3px; font: 11px "Liberation Serif", serif; letter-spacing: 0; }
.sbtns > span { width: 13.5px; }
.ital { font-style: italic; }
.sbtns sup { font-size: 8px; line-height: 0; }
.sbtns .c1 { margin: 0 4px 0 33px; }
.sbtns svg { margin-left: auto; }
.xform { height: 74px; flex: none; position: relative; display: grid; grid-template: 16.5px 17px 24.5px / 44px 43px 17px 43px; padding: 7px 0 0 17px; align-items: center; align-content: start; }
.xform label { text-align: right; padding-right: 2.5px; }
.xform .field { position: relative; }
.xform .dn { position: absolute; right: 3px; top: 5px; }
.anchor { position: absolute; left: 14px; top: 14px; }
.link { position: absolute; right: 6px; top: 18px; }

.status { height: 16px; flex: none; display: flex; align-items: center; padding-left: 2px; }
.count { width: 42px; margin-left: 10px; letter-spacing: -.2px; }
.bell { margin: 0 9px 0 6px; }

.menu { position: absolute; left: 348.5px; top: 18px; width: 227px; height: 489px; background: #e6e6e6; border: 1px solid #aaa; border-right-color: #777; border-bottom-color: #666; border-top: 0; box-shadow: 1px 1px 1px #666; }
.menu::before { content: ""; position: absolute; top: 0; left: 47px; right: 0; height: 1px; background: #aaa; }
.it { height: 14px; line-height: 14px; padding-left: 13px; position: relative; }
.it.sub { height: 13px; line-height: 13px; }
.sub::after { content: ""; position: absolute; right: 8px; top: 3.5px; border: 2.5px solid transparent; border-left: 4px solid #111; border-right: 0; }
.ck::before { content: "✔"; position: absolute; left: 3px; top: -1px; font: 8px/14px "DejaVu Sans", sans-serif; color: #111; }
.dis { color: #999; }
.menu kbd { font: inherit; letter-spacing: -.1px; font-size: 8.5px; position: absolute; left: 169.5px; }
.menu hr { border: 0; height: 1px; background: #a8a8a8; margin: 1.9px 0 1.7px 12px; }
.mark { position: absolute; left: -1px; top: 179px; width: 228px; height: 20px; border: 3px solid #f40000; }
```
FILE: rulers.js
```js
const NS = "http://www.w3.org/2000/svg";

function add(parent, name, attrs, text) {
  const el = document.createElementNS(NS, name);
  for (const key in attrs) el.setAttribute(key, attrs[key]);
  if (text !== undefined) el.textContent = text;
  parent.appendChild(el);
}

function tickLength(value) {
  if (value % 500 === 0) return 5;
  return value % 100 === 0 ? 3 : 1.5;
}

const horizontal = document.getElementById("hruler");
for (let v = -1600; v <= 5975; v += 25) {
  const x = 193.3 + v * 0.12045;
  add(horizontal, "path", { class: "tick", d: `M${x} 13V${13 - tickLength(v)}`, "stroke-width": 0.8 });
  const underMenu = v >= 0 && v < 2000;
  if (v % 500 === 0 && !underMenu) add(horizontal, "text", { class: "rl", x, y: 7 }, v);
}

const vertical = document.getElementById("vruler");
for (let v = -675; v <= 3950; v += 25) {
  const y = 87.5 + v * 0.126;
  add(vertical, "path", { class: "tick", d: `M13 ${y}H${13 - tickLength(v)}`, "stroke-width": 0.8 });
  if (v % 500 === 0) add(vertical, "text", { class: "rl", transform: `translate(6 ${y}) rotate(-90)` }, v);
}
```
